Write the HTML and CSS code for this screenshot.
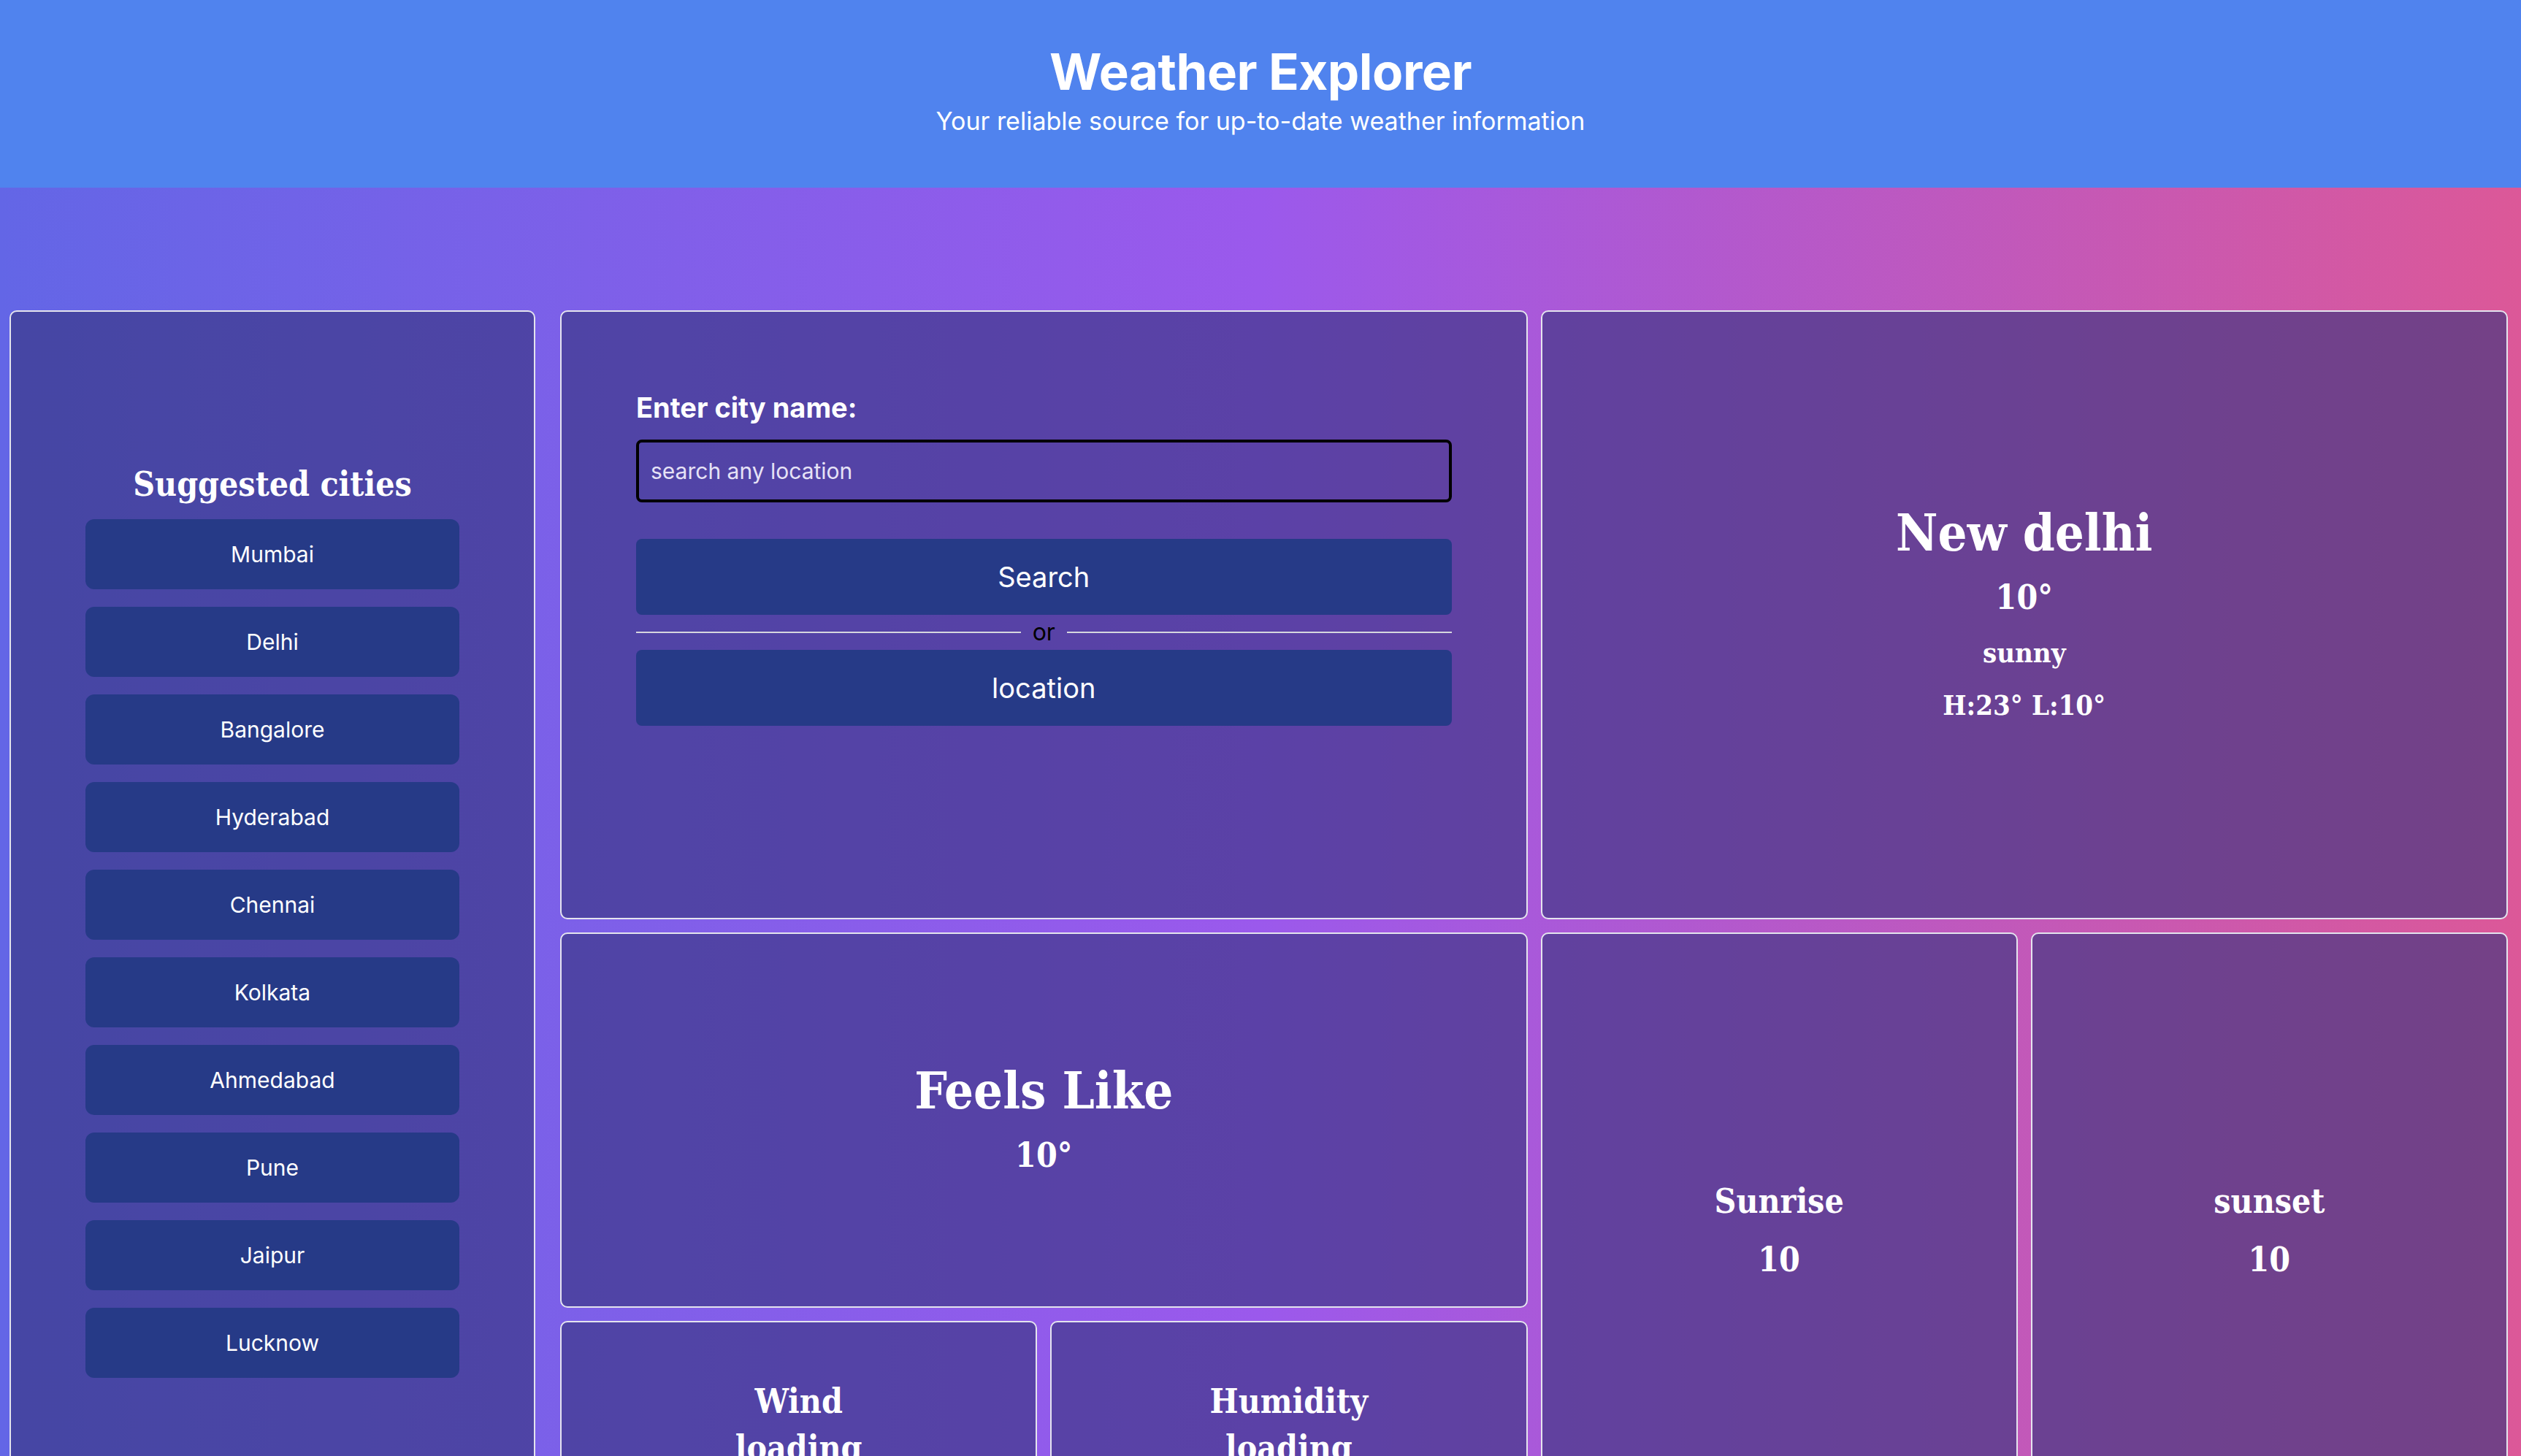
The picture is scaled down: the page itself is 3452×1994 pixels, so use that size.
FILE: index.html
```html
<!DOCTYPE html>
<html lang="en">
<head>
<meta charset="utf-8">
<title>Weather Explorer</title>
<link rel="stylesheet" href="styles.css">
</head>
<body>
<header class="site-header">
  <h1 class="site-title">Weather Explorer</h1>
  <p class="site-subtitle">Your reliable source for up-to-date weather information</p>
</header>
<main class="dashboard">
  <aside class="card sidebar">
    <h2 class="serif heading-md">Suggested cities</h2>
    <div class="city-list">
      <button class="city-btn">Mumbai</button>
      <button class="city-btn">Delhi</button>
      <button class="city-btn">Bangalore</button>
      <button class="city-btn">Hyderabad</button>
      <button class="city-btn">Chennai</button>
      <button class="city-btn">Kolkata</button>
      <button class="city-btn">Ahmedabad</button>
      <button class="city-btn">Pune</button>
      <button class="city-btn">Jaipur</button>
      <button class="city-btn">Lucknow</button>
    </div>
  </aside>
  <section class="grid">
    <div class="card search-card">
      <label class="field-label" for="city">Enter city name:</label>
      <input class="field-input" id="city" type="text" placeholder="search any location">
      <button class="action-btn search-btn">Search</button>
      <div class="divider"><span class="divider-text">or</span></div>
      <button class="action-btn">location</button>
    </div>
    <div class="card weather-card stack">
      <h2 class="serif heading-lg">New delhi</h2>
      <p class="serif text-md">10°</p>
      <p class="serif text-sm">sunny</p>
      <p class="serif text-sm hilo"><span>H:23°</span><span>L:10°</span></p>
    </div>
    <div class="card feels-card stack">
      <h2 class="serif heading-lg">Feels Like</h2>
      <p class="serif text-md">10°</p>
    </div>
    <div class="pair sun-pair">
      <div class="card stack">
        <h3 class="serif text-md">Sunrise</h3>
        <p class="serif text-md">10</p>
      </div>
      <div class="card stack">
        <h3 class="serif text-md">sunset</h3>
        <p class="serif text-md">10</p>
      </div>
    </div>
    <div class="pair mini-pair">
      <div class="card stack tight">
        <h3 class="serif text-md">Wind</h3>
        <p class="serif text-md">loading</p>
      </div>
      <div class="card stack tight">
        <h3 class="serif text-md">Humidity</h3>
        <p class="serif text-md">loading</p>
      </div>
    </div>
  </section>
</main>
</body>
</html>
```
FILE: styles.css
```css
* { box-sizing: border-box; }

html, body { margin: 0; padding: 0; }

body {
  font-family: Inter, "Noto Sans", sans-serif;
  color: #fff;
  background: linear-gradient(to right, #6366e6 0%, #9b59ec 50%, #dc5898 100%);
  min-height: 100vh;
}

.site-header {
  height: 257px;
  background: #5083ee;
  text-align: center;
  padding-top: 58px;
}

.site-title {
  margin: 0;
  font-size: 69px;
  line-height: 80px;
  font-weight: 700;
  letter-spacing: -0.5px;
}

.site-subtitle {
  margin: 0;
  font-size: 34px;
  line-height: 56px;
  font-weight: 400;
}

.dashboard {
  display: flex;
  align-items: flex-start;
  gap: 34px;
  padding: 168px 18px 40px 13px;
}

.card {
  background: rgba(50, 50, 122, 0.61);
  border: 2px solid #e4e4ee;
  border-radius: 10px;
}

.serif {
  font-family: "DejaVu Serif", "Liberation Serif", serif;
  font-stretch: condensed;
  font-weight: 700;
  margin: 0;
}

.sidebar {
  width: 720px;
  height: 1667px;
  flex: none;
  display: flex;
  flex-direction: column;
  align-items: center;
  justify-content: center;
}

.heading-md {
  font-size: 46px;
  line-height: 64px;
  margin-bottom: 16px;
}

.city-list {
  display: flex;
  flex-direction: column;
  gap: 24px;
}

.city-btn {
  width: 512px;
  height: 96px;
  border: none;
  border-radius: 12px;
  background: #263a87;
  color: #fff;
  font-family: Inter, "Noto Sans", sans-serif;
  font-size: 30px;
  font-weight: 400;
}

.grid {
  flex: 1;
  display: grid;
  grid-template-columns: 1fr 1fr;
  grid-template-rows: 834px 514px 283px;
  gap: 18px;
}

.search-card {
  grid-column: 1;
  grid-row: 1;
  padding: 103px 102px 0;
  display: flex;
  flex-direction: column;
}

.field-label {
  font-size: 38px;
  line-height: 56px;
  font-weight: 700;
  margin-bottom: 16px;
}

.field-input {
  height: 86px;
  width: 100%;
  border: 4px solid #000;
  border-radius: 8px;
  background: transparent;
  padding: 0 16px;
  color: #fff;
  font-family: Inter, "Noto Sans", sans-serif;
  font-size: 30px;
}

.field-input::placeholder { color: #e6e2f6; }

.action-btn {
  height: 104px;
  width: 100%;
  border: none;
  border-radius: 8px;
  background: #263a87;
  color: #fff;
  font-family: Inter, "Noto Sans", sans-serif;
  font-size: 38px;
  font-weight: 400;
}

.search-btn { margin-top: 50px; }

.divider {
  height: 48px;
  display: flex;
  align-items: center;
  gap: 16px;
}

.divider::before,
.divider::after {
  content: "";
  flex: 1;
  height: 2px;
  background: #d6d6de;
}

.divider-text {
  color: #000;
  font-size: 32px;
  line-height: 48px;
}

.stack {
  display: flex;
  flex-direction: column;
  align-items: center;
  justify-content: center;
  gap: 16px;
  text-align: center;
}

.stack.tight { gap: 0; }

.weather-card { grid-column: 2; grid-row: 1; }
.feels-card { grid-column: 1; grid-row: 2; }

.heading-lg {
  font-size: 70px;
  line-height: 80px;
}

.text-md {
  font-size: 46px;
  line-height: 64px;
}

.text-sm {
  font-size: 38px;
  line-height: 56px;
}

.hilo {
  display: flex;
  gap: 12px;
}

.pair {
  display: grid;
  grid-template-columns: 1fr 1fr;
  gap: 18px;
}

.sun-pair { grid-column: 2; grid-row: 2 / 4; }
.mini-pair { grid-column: 1; grid-row: 3; }
```
